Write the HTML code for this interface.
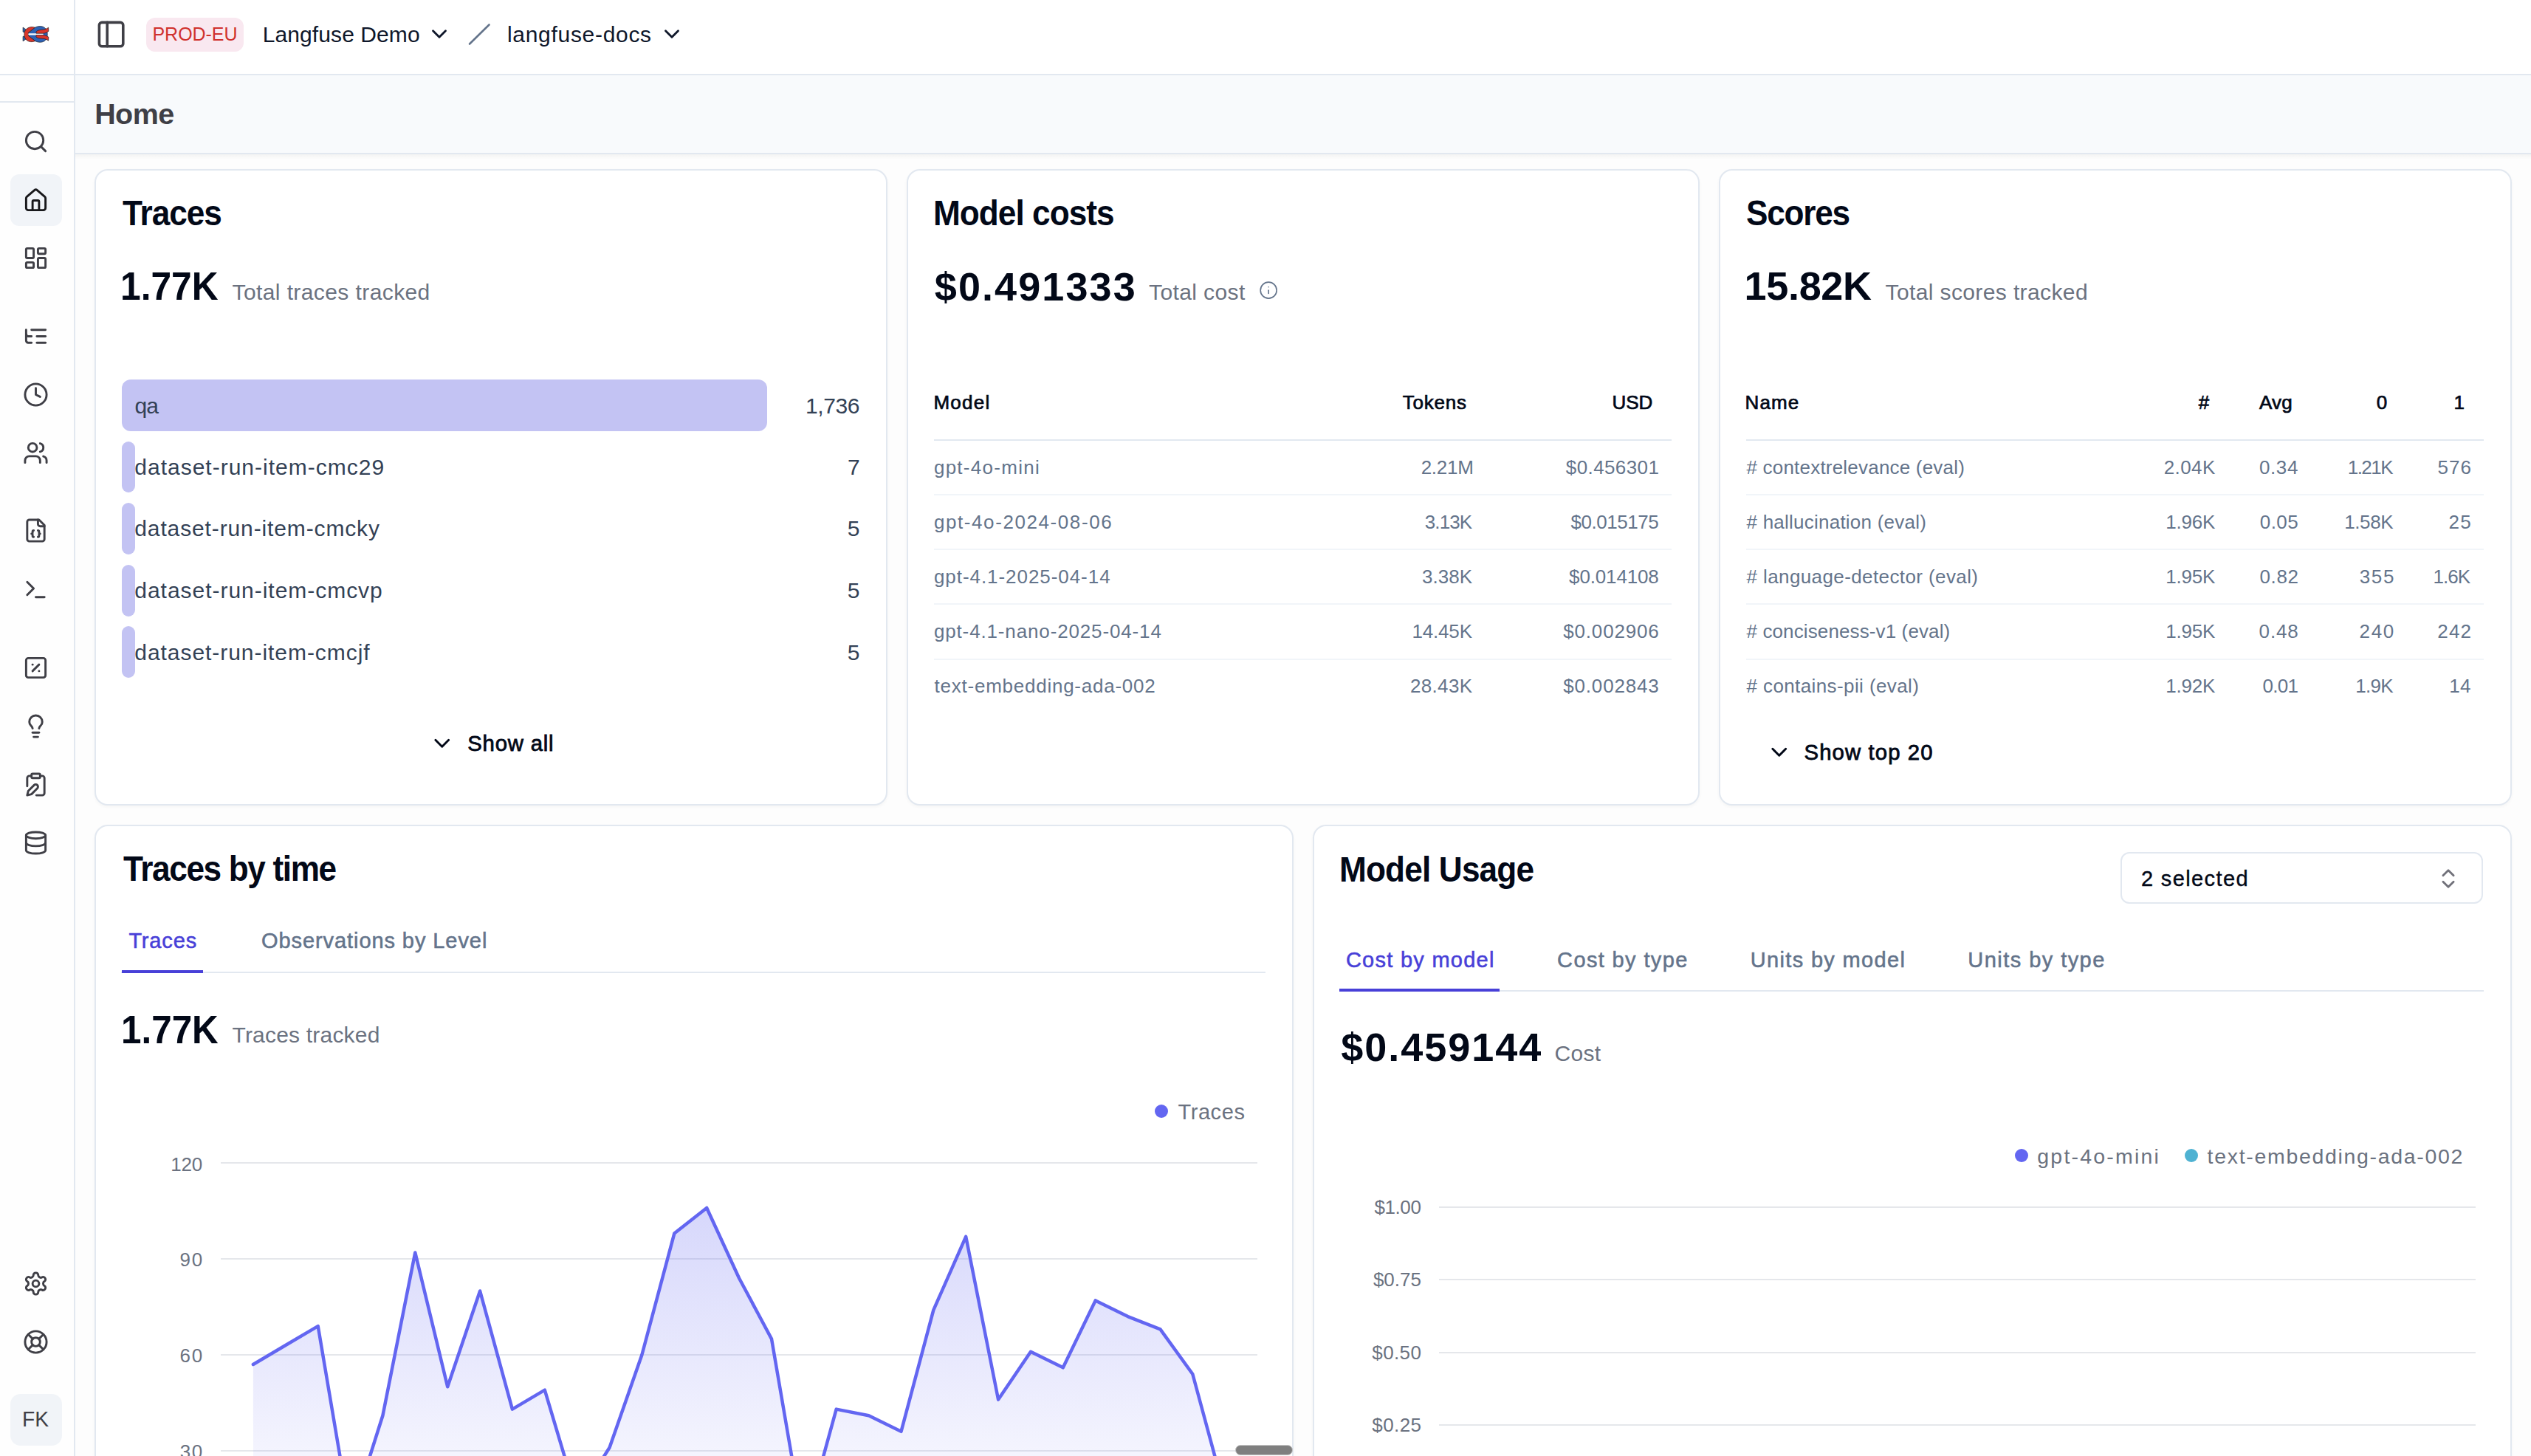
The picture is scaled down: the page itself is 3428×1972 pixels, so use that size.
<!DOCTYPE html>
<html><head><meta charset="utf-8"><title>Langfuse - Home</title>
<style>
html,body{margin:0;padding:0;}
body{width:3428px;height:1972px;overflow:hidden;position:relative;background:#fdfdfe;font-family:"Liberation Sans", sans-serif;}
.t{position:absolute;line-height:1;white-space:nowrap;}
.r{position:absolute;}
.ic{position:absolute;overflow:visible;}
@media (max-width: 1800px) { html { zoom: 0.5; } }
</style></head><body>
<div class="r" style="left:0px;top:0px;width:3428px;height:100px;background:#ffffff"></div>
<div class="r" style="left:0px;top:102px;width:100px;height:1870px;background:#fefefe"></div>
<div class="r" style="left:102px;top:208px;width:3326px;height:1764px;background:#fdfdfd"></div>
<div class="r" style="left:102px;top:102px;width:3326px;height:105px;background:#f8fafc"></div>
<div class="r" style="left:102px;top:209px;width:3326px;height:7px;background:linear-gradient(#f4f4f3, #fdfdfd)"></div>
<div class="r" style="left:0px;top:100px;width:3428px;height:2px;background:#e2e8f0"></div>
<div class="r" style="left:100px;top:0px;width:2px;height:1972px;background:#e2e8f0"></div>
<div class="r" style="left:0px;top:137px;width:100px;height:2px;background:#e2e8f0"></div>
<div class="r" style="left:102px;top:207px;width:3326px;height:2px;background:#e2e8f0"></div>
<svg class="ic" style="left:28px;top:30px" width="42" height="32" viewBox="0 0 1911 1456">
<g stroke="#151515" stroke-width="28" stroke-linejoin="round">
<path d="M140,320 L310,440 L240,620 L140,600 Z" fill="#2d62b5"/>
<path d="M140,1170 L310,1060 L240,860 L140,880 Z" fill="#2d62b5"/>
<path d="M470,640 C700,560 800,250 1200,250 C1500,250 1650,480 1650,750 C1650,1020 1500,1240 1200,1240 C800,1240 700,940 470,860 Z" fill="#2d62b5"/>
<path d="M880,330 C650,240 360,330 260,560 C200,700 210,850 280,1000 C380,1180 620,1280 900,1160 L480,850 L470,650 Z" fill="#d9352a"/>
<path d="M480,690 L1390,690 L1390,800 L480,800 C460,760 460,730 480,690 Z" fill="#ffffff" stroke="none"/>
<path d="M950,600 C1000,520 1150,480 1300,470 C1450,460 1560,440 1710,330 L1720,560 C1620,640 1500,690 1380,690 L960,690 Z" fill="#d9352a"/>
<path d="M950,900 C1000,980 1150,1010 1300,1010 C1450,1010 1560,1040 1710,1140 L1720,920 C1620,850 1500,800 1380,800 L960,800 Z" fill="#d9352a"/>
</g></svg>
<svg class="ic" style="left:128.60px;top:24.60px" width="43.2" height="43.2" viewBox="0 0 24 24" fill="none" stroke="#3f3f46" stroke-width="2" stroke-linecap="round" stroke-linejoin="round"><rect width="18" height="18" x="3" y="3" rx="2"/><path d="M9 3v18"/></svg>
<div class="r" style="left:198px;top:24px;width:132px;height:46px;background:#f9e8f0;border-radius:12px"></div>
<div class="t" style="top:34.10px;left:206.50px;font-size:25px;font-weight:400;color:#d0312d;letter-spacing:-0.050px;">PROD-EU</div>
<div class="t" style="top:31.96px;left:355.80px;font-size:30px;font-weight:400;color:#0f172a;letter-spacing:0.083px;">Langfuse Demo</div>
<svg class="ic" style="left:577.50px;top:29.30px" width="34" height="34" viewBox="0 0 24 24" fill="none" stroke="#0f172a" stroke-width="2" stroke-linecap="round" stroke-linejoin="round"><path d="m6 9 6 6 6-6"/></svg>
<svg class="ic" style="left:630px;top:28px" width="40" height="40" viewBox="0 0 40 40"><path d="M6 31.5 L32.5 5.5" stroke="#64748b" stroke-width="2.6" stroke-linecap="round"/></svg>
<div class="t" style="top:31.96px;left:687.00px;font-size:30px;font-weight:400;color:#0f172a;letter-spacing:0.692px;">langfuse-docs</div>
<svg class="ic" style="left:892.50px;top:29.30px" width="34" height="34" viewBox="0 0 24 24" fill="none" stroke="#0f172a" stroke-width="2" stroke-linecap="round" stroke-linejoin="round"><path d="m6 9 6 6 6-6"/></svg>
<div class="r" style="left:14px;top:236px;width:70px;height:70px;background:#f1f4f8;border-radius:12px"></div>
<svg class="ic" style="left:31.20px;top:174.10px" width="35" height="35" viewBox="0 0 24 24" fill="none" stroke="#3f3f46" stroke-width="2" stroke-linecap="round" stroke-linejoin="round"><circle cx="11" cy="11" r="8"/><path d="m21 21-4.3-4.3"/></svg>
<svg class="ic" style="left:31.20px;top:253.50px" width="35" height="35" viewBox="0 0 24 24" fill="none" stroke="#18181b" stroke-width="2" stroke-linecap="round" stroke-linejoin="round"><path d="M15 21v-8a1 1 0 0 0-1-1h-4a1 1 0 0 0-1 1v8"/><path d="M3 10a2 2 0 0 1 .709-1.528l7-5.999a2 2 0 0 1 2.582 0l7 5.999A2 2 0 0 1 21 10v9a2 2 0 0 1-2 2H5a2 2 0 0 1-2-2z"/></svg>
<svg class="ic" style="left:31.20px;top:332.00px" width="35" height="35" viewBox="0 0 24 24" fill="none" stroke="#3f3f46" stroke-width="2" stroke-linecap="round" stroke-linejoin="round"><rect width="7" height="9" x="3" y="3" rx="1"/><rect width="7" height="5" x="14" y="3" rx="1"/><rect width="7" height="9" x="14" y="12" rx="1"/><rect width="7" height="5" x="3" y="16" rx="1"/></svg>
<svg class="ic" style="left:31.20px;top:437.50px" width="35" height="35" viewBox="0 0 24 24" fill="none" stroke="#3f3f46" stroke-width="2" stroke-linecap="round" stroke-linejoin="round"><path d="M21 12h-8"/><path d="M21 6H8"/><path d="M21 18h-8"/><path d="M3 6v4c0 1.1.9 2 2 2h3"/><path d="M3 10v6c0 1.1.9 2 2 2h3"/></svg>
<svg class="ic" style="left:31.20px;top:516.50px" width="35" height="35" viewBox="0 0 24 24" fill="none" stroke="#3f3f46" stroke-width="2" stroke-linecap="round" stroke-linejoin="round"><circle cx="12" cy="12" r="10"/><polyline points="12 6 12 12 16 14"/></svg>
<svg class="ic" style="left:31.20px;top:595.50px" width="35" height="35" viewBox="0 0 24 24" fill="none" stroke="#3f3f46" stroke-width="2" stroke-linecap="round" stroke-linejoin="round"><path d="M16 21v-2a4 4 0 0 0-4-4H6a4 4 0 0 0-4 4v2"/><circle cx="9" cy="7" r="4"/><path d="M22 21v-2a4 4 0 0 0-3-3.87"/><path d="M16 3.13a4 4 0 0 1 0 7.75"/></svg>
<svg class="ic" style="left:31.20px;top:701.00px" width="35" height="35" viewBox="0 0 24 24" fill="none" stroke="#3f3f46" stroke-width="2" stroke-linecap="round" stroke-linejoin="round"><path d="M15 2H6a2 2 0 0 0-2 2v16a2 2 0 0 0 2 2h12a2 2 0 0 0 2-2V7Z"/><path d="M14 2v4a2 2 0 0 0 2 2h4"/><path d="M10 12a1 1 0 0 0-1 1v1a1 1 0 0 1-1 1 1 1 0 0 1 1 1v1a1 1 0 0 0 1 1"/><path d="M14 18a1 1 0 0 0 1-1v-1a1 1 0 0 1 1-1 1 1 0 0 1-1-1v-1a1 1 0 0 0-1-1"/></svg>
<svg class="ic" style="left:31.20px;top:780.50px" width="35" height="35" viewBox="0 0 24 24" fill="none" stroke="#3f3f46" stroke-width="2" stroke-linecap="round" stroke-linejoin="round"><polyline points="4 17 10 11 4 5"/><line x1="12" x2="20" y1="19" y2="19"/></svg>
<svg class="ic" style="left:31.20px;top:886.50px" width="35" height="35" viewBox="0 0 24 24" fill="none" stroke="#3f3f46" stroke-width="2" stroke-linecap="round" stroke-linejoin="round"><rect width="18" height="18" x="3" y="3" rx="2"/><path d="m15 9-6 6"/><path d="M9 9h.01"/><path d="M15 15h.01"/></svg>
<svg class="ic" style="left:31.20px;top:966.00px" width="35" height="35" viewBox="0 0 24 24" fill="none" stroke="#3f3f46" stroke-width="2" stroke-linecap="round" stroke-linejoin="round"><path d="M15 14c.2-1 .7-1.7 1.5-2.5 1-.9 1.5-2.2 1.5-3.5A6 6 0 0 0 6 8c0 1 .2 2.2 1.5 3.5.7.7 1.3 1.5 1.5 2.5"/><path d="M9 18h6"/><path d="M10 22h4"/></svg>
<svg class="ic" style="left:31.20px;top:1045.10px" width="35" height="35" viewBox="0 0 24 24" fill="none" stroke="#3f3f46" stroke-width="2" stroke-linecap="round" stroke-linejoin="round"><rect width="8" height="4" x="8" y="2" rx="1"/><path d="M10.4 12.6a2 2 0 0 1 3 3L8 21l-4 1 1-4Z"/><path d="M16 4h2a2 2 0 0 1 2 2v14a2 2 0 0 1-2 2h-5.5"/><path d="M4 13.5V6a2 2 0 0 1 2-2h2"/></svg>
<svg class="ic" style="left:31.20px;top:1123.50px" width="35" height="35" viewBox="0 0 24 24" fill="none" stroke="#3f3f46" stroke-width="2" stroke-linecap="round" stroke-linejoin="round"><ellipse cx="12" cy="5" rx="9" ry="3"/><path d="M3 5V19A9 3 0 0 0 21 19V5"/><path d="M3 12A9 3 0 0 0 21 12"/></svg>
<svg class="ic" style="left:31.20px;top:1720.50px" width="35" height="35" viewBox="0 0 24 24" fill="none" stroke="#3f3f46" stroke-width="2" stroke-linecap="round" stroke-linejoin="round"><path d="M12.22 2h-.44a2 2 0 0 0-2 2v.18a2 2 0 0 1-1 1.73l-.43.25a2 2 0 0 1-2 0l-.15-.08a2 2 0 0 0-2.73.73l-.22.38a2 2 0 0 0 .73 2.73l.15.1a2 2 0 0 1 1 1.72v.51a2 2 0 0 1-1 1.74l-.15.09a2 2 0 0 0-.73 2.73l.22.38a2 2 0 0 0 2.73.73l.15-.08a2 2 0 0 1 2 0l.43.25a2 2 0 0 1 1 1.73V20a2 2 0 0 0 2 2h.44a2 2 0 0 0 2-2v-.18a2 2 0 0 1 1-1.73l.43-.25a2 2 0 0 1 2 0l.15.08a2 2 0 0 0 2.73-.73l.22-.39a2 2 0 0 0-.73-2.73l-.15-.08a2 2 0 0 1-1-1.74v-.5a2 2 0 0 1 1-1.74l.15-.09a2 2 0 0 0 .73-2.73l-.22-.38a2 2 0 0 0-2.73-.73l-.15.08a2 2 0 0 1-2 0l-.43-.25a2 2 0 0 1-1-1.73V4a2 2 0 0 0-2-2z"/><circle cx="12" cy="12" r="3"/></svg>
<svg class="ic" style="left:31.20px;top:1799.50px" width="35" height="35" viewBox="0 0 24 24" fill="none" stroke="#3f3f46" stroke-width="2" stroke-linecap="round" stroke-linejoin="round"><circle cx="12" cy="12" r="10"/><path d="m4.93 4.93 4.24 4.24"/><path d="m14.83 9.17 4.24-4.24"/><path d="m14.83 14.83 4.24 4.24"/><path d="m9.17 14.83-4.24 4.24"/><circle cx="12" cy="12" r="4"/></svg>
<div class="r" style="left:14px;top:1888px;width:70px;height:70px;background:#f1f4f8;border-radius:14px"></div>
<div class="t" style="top:1907.36px;left:30.45px;font-size:30px;font-weight:400;color:#3f3f46;transform:scaleX(0.9407);transform-origin:0 0;">FK</div>
<div class="t" style="top:135.30px;left:128.20px;font-size:39.5px;font-weight:700;color:#3f3f46;letter-spacing:-0.600px;">Home</div>
<div class="r" style="left:128px;top:229px;width:1074px;height:862px;background:#fff;border:2px solid #e2e8f0;border-radius:18px;box-sizing:border-box;box-shadow:0 2px 4px rgba(0,0,0,0.035)"></div>
<div class="r" style="left:1228px;top:229px;width:1074px;height:862px;background:#fff;border:2px solid #e2e8f0;border-radius:18px;box-sizing:border-box;box-shadow:0 2px 4px rgba(0,0,0,0.035)"></div>
<div class="r" style="left:2328px;top:229px;width:1074px;height:862px;background:#fff;border:2px solid #e2e8f0;border-radius:18px;box-sizing:border-box;box-shadow:0 2px 4px rgba(0,0,0,0.035)"></div>
<div class="r" style="left:128px;top:1117px;width:1624px;height:1083px;background:#fff;border:2px solid #e2e8f0;border-radius:18px;box-sizing:border-box;box-shadow:0 2px 4px rgba(0,0,0,0.035)"></div>
<div class="r" style="left:1778px;top:1117px;width:1624px;height:1083px;background:#fff;border:2px solid #e2e8f0;border-radius:18px;box-sizing:border-box;box-shadow:0 2px 4px rgba(0,0,0,0.035)"></div>
<div class="t" style="top:265.22px;left:166.13px;font-size:47.5px;font-weight:700;color:#020817;letter-spacing:-1.125px;transform:scaleX(0.9300);transform-origin:0 0;">Traces</div>
<div class="t" style="top:360.21px;left:163.47px;font-size:54px;font-weight:700;color:#020817;transform:scaleX(0.9201);transform-origin:0 0;">1.77K</div>
<div class="t" style="top:380.56px;left:314.50px;font-size:30px;font-weight:400;color:#6b7280;letter-spacing:0.405px;">Total traces tracked</div>
<div class="r" style="left:165px;top:514px;width:874px;height:70px;background:#c3c3f3;border-radius:12px"></div>
<div class="r" style="left:165px;top:598px;width:18px;height:69px;background:#c3c3f3;border-radius:9px"></div>
<div class="r" style="left:165px;top:681px;width:18px;height:70px;background:#c3c3f3;border-radius:9px"></div>
<div class="r" style="left:165px;top:765px;width:18px;height:70px;background:#c3c3f3;border-radius:9px"></div>
<div class="r" style="left:165px;top:848px;width:18px;height:70px;background:#c3c3f3;border-radius:9px"></div>
<div class="t" style="top:534.56px;left:182.40px;font-size:30px;font-weight:400;color:#334155;letter-spacing:-0.800px;">qa</div>
<div class="t" style="top:618.46px;left:182.30px;font-size:30px;font-weight:400;color:#334155;letter-spacing:1.000px;">dataset-run-item-cmc29</div>
<div class="t" style="top:701.36px;left:182.30px;font-size:30px;font-weight:400;color:#334155;letter-spacing:0.871px;">dataset-run-item-cmcky</div>
<div class="t" style="top:785.06px;left:182.30px;font-size:30px;font-weight:400;color:#334155;letter-spacing:0.971px;">dataset-run-item-cmcvp</div>
<div class="t" style="top:868.56px;left:182.30px;font-size:30px;font-weight:400;color:#334155;letter-spacing:0.948px;">dataset-run-item-cmcjf</div>
<div class="t" style="top:534.56px;left:1091.10px;font-size:30px;font-weight:400;color:#334155;letter-spacing:-0.425px;">1,736</div>
<div class="t" style="top:618.46px;left:1148.00px;font-size:30px;font-weight:400;color:#334155;">7</div>
<div class="t" style="top:701.36px;left:1147.80px;font-size:30px;font-weight:400;color:#334155;">5</div>
<div class="t" style="top:785.06px;left:1147.80px;font-size:30px;font-weight:400;color:#334155;">5</div>
<div class="t" style="top:868.56px;left:1147.80px;font-size:30px;font-weight:400;color:#334155;">5</div>
<svg class="ic" style="left:580.65px;top:988.55px" width="35.5" height="35.5" viewBox="0 0 24 24" fill="none" stroke="#020817" stroke-width="2" stroke-linecap="round" stroke-linejoin="round"><path d="m6 9 6 6 6-6"/></svg>
<div class="t" style="top:992.15px;left:633.30px;font-size:29.3px;font-weight:400;color:#020817;letter-spacing:0.786px;-webkit-text-stroke:0.8px #020817;">Show all</div>
<div class="t" style="top:265.22px;left:1263.52px;font-size:47.5px;font-weight:700;color:#020817;letter-spacing:-1.048px;transform:scaleX(0.9300);transform-origin:0 0;">Model costs</div>
<div class="t" style="top:360.71px;left:1265.80px;font-size:54px;font-weight:700;color:#020817;letter-spacing:2.075px;">$0.491333</div>
<div class="t" style="top:380.56px;left:1556.10px;font-size:30px;font-weight:400;color:#6b7280;letter-spacing:0.378px;">Total cost</div>
<svg class="ic" style="left:1704.95px;top:379.95px" width="26.3" height="26.3" viewBox="0 0 24 24" fill="none" stroke="#64748b" stroke-width="1.5" stroke-linecap="round" stroke-linejoin="round"><circle cx="12" cy="12" r="10"/><path d="M12 16v-4"/><path d="M12 8h.01"/></svg>
<div class="t" style="top:531.95px;left:1264.40px;font-size:26px;font-weight:400;color:#020817;letter-spacing:1.275px;-webkit-text-stroke:0.7px #020817;">Model</div>
<div class="t" style="top:531.95px;left:1899.80px;font-size:26px;font-weight:400;color:#020817;letter-spacing:0.740px;-webkit-text-stroke:0.7px #020817;">Tokens</div>
<div class="t" style="top:531.95px;left:2183.50px;font-size:26px;font-weight:400;color:#020817;letter-spacing:-0.050px;-webkit-text-stroke:0.7px #020817;">USD</div>
<div class="r" style="left:1265px;top:595px;width:999px;height:2px;background:#e2e8f0"></div>
<div class="t" style="top:619.95px;left:1264.90px;font-size:26px;font-weight:400;color:#64748b;letter-spacing:1.280px;">gpt-4o-mini</div>
<div class="t" style="top:619.95px;left:1924.70px;font-size:26px;font-weight:400;color:#64748b;letter-spacing:-0.275px;">2.21M</div>
<div class="t" style="top:619.95px;left:2120.80px;font-size:26px;font-weight:400;color:#64748b;letter-spacing:0.400px;">$0.456301</div>
<div class="t" style="top:693.85px;left:1264.90px;font-size:26px;font-weight:400;color:#64748b;letter-spacing:1.588px;">gpt-4o-2024-08-06</div>
<div class="t" style="top:693.85px;left:1929.80px;font-size:26px;font-weight:400;color:#64748b;letter-spacing:-0.925px;">3.13K</div>
<div class="t" style="top:693.85px;left:2127.50px;font-size:26px;font-weight:400;color:#64748b;letter-spacing:-0.463px;">$0.015175</div>
<div class="t" style="top:767.75px;left:1264.90px;font-size:26px;font-weight:400;color:#64748b;letter-spacing:0.947px;">gpt-4.1-2025-04-14</div>
<div class="t" style="top:767.75px;left:1925.90px;font-size:26px;font-weight:400;color:#64748b;letter-spacing:0.050px;">3.38K</div>
<div class="t" style="top:767.75px;left:2125.10px;font-size:26px;font-weight:400;color:#64748b;letter-spacing:-0.150px;">$0.014108</div>
<div class="t" style="top:841.65px;left:1264.90px;font-size:26px;font-weight:400;color:#64748b;letter-spacing:0.859px;">gpt-4.1-nano-2025-04-14</div>
<div class="t" style="top:841.65px;left:1912.40px;font-size:26px;font-weight:400;color:#64748b;letter-spacing:-0.160px;">14.45K</div>
<div class="t" style="top:841.65px;left:2117.20px;font-size:26px;font-weight:400;color:#64748b;letter-spacing:0.837px;">$0.002906</div>
<div class="t" style="top:915.55px;left:1265.60px;font-size:26px;font-weight:400;color:#64748b;letter-spacing:0.752px;">text-embedding-ada-002</div>
<div class="t" style="top:915.55px;left:1910.00px;font-size:26px;font-weight:400;color:#64748b;letter-spacing:0.320px;">28.43K</div>
<div class="t" style="top:915.55px;left:2117.20px;font-size:26px;font-weight:400;color:#64748b;letter-spacing:0.837px;">$0.002843</div>
<div class="r" style="left:1265px;top:669px;width:999px;height:2px;background:#f1f5f9"></div>
<div class="r" style="left:1265px;top:743px;width:999px;height:2px;background:#f1f5f9"></div>
<div class="r" style="left:1265px;top:817px;width:999px;height:2px;background:#f1f5f9"></div>
<div class="r" style="left:1265px;top:892px;width:999px;height:2px;background:#f1f5f9"></div>
<div class="t" style="top:265.22px;left:2364.70px;font-size:47.5px;font-weight:700;color:#020817;letter-spacing:-1.343px;transform:scaleX(0.9300);transform-origin:0 0;">Scores</div>
<div class="t" style="top:360.21px;left:2362.60px;font-size:54px;font-weight:700;color:#020817;letter-spacing:-0.340px;">15.82K</div>
<div class="t" style="top:380.56px;left:2553.50px;font-size:30px;font-weight:400;color:#6b7280;letter-spacing:0.384px;">Total scores tracked</div>
<div class="t" style="top:531.75px;left:2363.50px;font-size:26px;font-weight:400;color:#020817;letter-spacing:1.133px;-webkit-text-stroke:0.7px #020817;">Name</div>
<div class="t" style="top:531.75px;left:2977.70px;font-size:26px;font-weight:400;color:#020817;-webkit-text-stroke:0.7px #020817;">#</div>
<div class="t" style="top:531.75px;left:3059.90px;font-size:26px;font-weight:400;color:#020817;letter-spacing:0.300px;-webkit-text-stroke:0.7px #020817;">Avg</div>
<div class="t" style="top:531.75px;left:3218.70px;font-size:26px;font-weight:400;color:#020817;-webkit-text-stroke:0.7px #020817;">0</div>
<div class="t" style="top:531.75px;left:3323.50px;font-size:26px;font-weight:400;color:#020817;-webkit-text-stroke:0.7px #020817;">1</div>
<div class="r" style="left:2365px;top:595px;width:999px;height:2px;background:#e2e8f0"></div>
<div class="t" style="top:619.95px;left:2365.50px;font-size:26px;font-weight:400;color:#64748b;letter-spacing:0.204px;"># contextrelevance (eval)</div>
<div class="t" style="top:619.95px;left:2930.70px;font-size:26px;font-weight:400;color:#64748b;letter-spacing:0.425px;">2.04K</div>
<div class="t" style="top:619.95px;left:3059.90px;font-size:26px;font-weight:400;color:#64748b;letter-spacing:0.633px;">0.34</div>
<div class="t" style="top:619.95px;left:3179.70px;font-size:26px;font-weight:400;color:#64748b;letter-spacing:-1.500px;">1.21K</div>
<div class="t" style="top:619.95px;left:3301.50px;font-size:26px;font-weight:400;color:#64748b;letter-spacing:1.050px;">576</div>
<div class="t" style="top:693.85px;left:2365.50px;font-size:26px;font-weight:400;color:#64748b;letter-spacing:0.233px;"># hallucination (eval)</div>
<div class="t" style="top:693.85px;left:2933.20px;font-size:26px;font-weight:400;color:#64748b;letter-spacing:-0.200px;">1.96K</div>
<div class="t" style="top:693.85px;left:3060.80px;font-size:26px;font-weight:400;color:#64748b;letter-spacing:0.433px;">0.05</div>
<div class="t" style="top:693.85px;left:3175.20px;font-size:26px;font-weight:400;color:#64748b;letter-spacing:-0.375px;">1.58K</div>
<div class="t" style="top:693.85px;left:3316.40px;font-size:26px;font-weight:400;color:#64748b;letter-spacing:1.500px;">25</div>
<div class="t" style="top:767.75px;left:2365.50px;font-size:26px;font-weight:400;color:#64748b;letter-spacing:0.400px;"># language-detector (eval)</div>
<div class="t" style="top:767.75px;left:2933.20px;font-size:26px;font-weight:400;color:#64748b;letter-spacing:-0.200px;">1.95K</div>
<div class="t" style="top:767.75px;left:3060.50px;font-size:26px;font-weight:400;color:#64748b;letter-spacing:0.600px;">0.82</div>
<div class="t" style="top:767.75px;left:3195.80px;font-size:26px;font-weight:400;color:#64748b;letter-spacing:1.600px;">355</div>
<div class="t" style="top:767.75px;left:3295.50px;font-size:26px;font-weight:400;color:#64748b;letter-spacing:-0.933px;">1.6K</div>
<div class="t" style="top:841.65px;left:2365.50px;font-size:26px;font-weight:400;color:#64748b;letter-spacing:0.118px;"># conciseness-v1 (eval)</div>
<div class="t" style="top:841.65px;left:2933.20px;font-size:26px;font-weight:400;color:#64748b;letter-spacing:-0.200px;">1.95K</div>
<div class="t" style="top:841.65px;left:3059.60px;font-size:26px;font-weight:400;color:#64748b;letter-spacing:0.867px;">0.48</div>
<div class="t" style="top:841.65px;left:3195.50px;font-size:26px;font-weight:400;color:#64748b;letter-spacing:1.700px;">240</div>
<div class="t" style="top:841.65px;left:3301.30px;font-size:26px;font-weight:400;color:#64748b;letter-spacing:1.200px;">242</div>
<div class="t" style="top:915.55px;left:2365.50px;font-size:26px;font-weight:400;color:#64748b;letter-spacing:0.400px;"># contains-pii (eval)</div>
<div class="t" style="top:915.55px;left:2933.20px;font-size:26px;font-weight:400;color:#64748b;letter-spacing:-0.200px;">1.92K</div>
<div class="t" style="top:915.55px;left:3064.40px;font-size:26px;font-weight:400;color:#64748b;letter-spacing:-0.700px;">0.01</div>
<div class="t" style="top:915.55px;left:3190.30px;font-size:26px;font-weight:400;color:#64748b;letter-spacing:-0.700px;">1.9K</div>
<div class="t" style="top:915.55px;left:3317.20px;font-size:26px;font-weight:400;color:#64748b;letter-spacing:0.400px;">14</div>
<div class="r" style="left:2365px;top:669px;width:999px;height:2px;background:#f1f5f9"></div>
<div class="r" style="left:2365px;top:743px;width:999px;height:2px;background:#f1f5f9"></div>
<div class="r" style="left:2365px;top:817px;width:999px;height:2px;background:#f1f5f9"></div>
<div class="r" style="left:2365px;top:892px;width:999px;height:2px;background:#f1f5f9"></div>
<svg class="ic" style="left:2391.95px;top:1000.55px" width="35.5" height="35.5" viewBox="0 0 24 24" fill="none" stroke="#020817" stroke-width="2" stroke-linecap="round" stroke-linejoin="round"><path d="m6 9 6 6 6-6"/></svg>
<div class="t" style="top:1003.95px;left:2443.50px;font-size:29.3px;font-weight:400;color:#020817;letter-spacing:1.110px;-webkit-text-stroke:0.8px #020817;">Show top 20</div>
<div class="t" style="top:1152.92px;left:166.53px;font-size:47.5px;font-weight:700;color:#020817;letter-spacing:-1.468px;transform:scaleX(0.9300);transform-origin:0 0;">Traces by time</div>
<div class="t" style="top:1259.91px;left:174.40px;font-size:29px;font-weight:400;color:#4840d8;letter-spacing:0.840px;-webkit-text-stroke:0.55px #4840d8;">Traces</div>
<div class="t" style="top:1259.91px;left:354.00px;font-size:29px;font-weight:400;color:#64748b;letter-spacing:0.920px;-webkit-text-stroke:0.55px #64748b;">Observations by Level</div>
<div class="r" style="left:164px;top:1316px;width:1550px;height:2px;background:#e2e8f0"></div>
<div class="r" style="left:165px;top:1314px;width:110px;height:4px;background:#4840d8"></div>
<div class="t" style="top:1366.51px;left:163.89px;font-size:54px;font-weight:700;color:#020817;transform:scaleX(0.9144);transform-origin:0 0;">1.77K</div>
<div class="t" style="top:1386.86px;left:314.50px;font-size:30px;font-weight:400;color:#6b7280;letter-spacing:0.200px;">Traces tracked</div>
<div class="r" style="left:1564px;top:1495.8px;width:18px;height:18px;border-radius:50%;background:#6366f1"></div>
<div class="t" style="top:1491.71px;left:1595.40px;font-size:29px;font-weight:400;color:#6b7280;letter-spacing:0.600px;">Traces</div>
<div class="r" style="left:299px;top:1574px;width:1404px;height:2px;background:#e5e7eb"></div>
<div class="t" style="top:1563.65px;left:231.20px;font-size:26px;font-weight:400;color:#6b7280;letter-spacing:-0.150px;">120</div>
<div class="r" style="left:299px;top:1704px;width:1404px;height:2px;background:#e5e7eb"></div>
<div class="t" style="top:1693.35px;left:243.50px;font-size:26px;font-weight:400;color:#6b7280;letter-spacing:1.800px;">90</div>
<div class="r" style="left:299px;top:1834px;width:1404px;height:2px;background:#e5e7eb"></div>
<div class="t" style="top:1823.15px;left:243.40px;font-size:26px;font-weight:400;color:#6b7280;letter-spacing:1.900px;">60</div>
<div class="r" style="left:299px;top:1964px;width:1404px;height:2px;background:#e5e7eb"></div>
<div class="t" style="top:1953.15px;left:243.70px;font-size:26px;font-weight:400;color:#6b7280;letter-spacing:1.600px;">30</div>
<svg class="ic" style="left:0;top:0" width="3428" height="1972" viewBox="0 0 3428 1972">
<defs><linearGradient id="g1" x1="0" y1="0" x2="0" y2="1"><stop offset="0" stop-color="#6366f1" stop-opacity="0.26"/><stop offset="1" stop-color="#6366f1" stop-opacity="0.0"/></linearGradient></defs>
<path d="M342.9,2094 L342.9,1848.0 L386.8,1822.0 L430.7,1796.1 L474.6,2055.7 L518.4,1917.2 L562.3,1696.5 L606.2,1878.3 L650.1,1748.5 L693.9,1908.6 L737.8,1882.6 L781.7,2029.7 L825.6,1960.5 L869.4,1835.0 L913.3,1670.6 L957.2,1636.0 L1001.1,1731.2 L1045.0,1813.4 L1088.8,2068.6 L1132.7,1908.6 L1176.6,1917.2 L1220.5,1938.8 L1264.3,1774.4 L1308.2,1674.9 L1352.1,1895.6 L1396.0,1830.7 L1439.8,1852.3 L1483.7,1761.4 L1527.6,1783.1 L1571.5,1800.4 L1615.3,1861.0 L1659.2,2023.2 L1659.2,2094 Z" fill="url(#g1)"/>
<polyline points="342.9,1848.0 386.8,1822.0 430.7,1796.1 474.6,2055.7 518.4,1917.2 562.3,1696.5 606.2,1878.3 650.1,1748.5 693.9,1908.6 737.8,1882.6 781.7,2029.7 825.6,1960.5 869.4,1835.0 913.3,1670.6 957.2,1636.0 1001.1,1731.2 1045.0,1813.4 1088.8,2068.6 1132.7,1908.6 1176.6,1917.2 1220.5,1938.8 1264.3,1774.4 1308.2,1674.9 1352.1,1895.6 1396.0,1830.7 1439.8,1852.3 1483.7,1761.4 1527.6,1783.1 1571.5,1800.4 1615.3,1861.0 1659.2,2023.2" fill="none" stroke="#6366f1" stroke-width="4.5" stroke-linejoin="round" stroke-linecap="round"/>
</svg>
<div class="r" style="left:1673px;top:1957px;width:78px;height:14px;background:#7f7f7f;border:1.5px solid #c4c4c4;border-radius:8px;box-sizing:border-box"></div>
<div class="t" style="top:1153.72px;left:1814.02px;font-size:47.5px;font-weight:700;color:#020817;letter-spacing:-0.906px;transform:scaleX(0.9300);transform-origin:0 0;">Model Usage</div>
<div class="r" style="left:2872px;top:1154px;width:491px;height:70px;background:#fff;border:2px solid #e2e8f0;border-radius:12px;box-sizing:border-box"></div>
<div class="t" style="top:1176.21px;left:2899.90px;font-size:29px;font-weight:400;color:#020817;letter-spacing:1.389px;-webkit-text-stroke:0.4px #020817;">2 selected</div>
<svg class="ic" style="left:3299.00px;top:1172.50px" width="34" height="34" viewBox="0 0 24 24" fill="none" stroke="#71717a" stroke-width="2" stroke-linecap="round" stroke-linejoin="round"><path d="m7 15 5 5 5-5"/><path d="m7 9 5-5 5 5"/></svg>
<div class="t" style="top:1285.91px;left:1822.90px;font-size:29px;font-weight:400;color:#4840d8;letter-spacing:1.267px;-webkit-text-stroke:0.55px #4840d8;">Cost by model</div>
<div class="t" style="top:1285.91px;left:2109.10px;font-size:29px;font-weight:400;color:#64748b;letter-spacing:1.364px;-webkit-text-stroke:0.55px #64748b;">Cost by type</div>
<div class="t" style="top:1285.91px;left:2370.80px;font-size:29px;font-weight:400;color:#64748b;letter-spacing:1.331px;-webkit-text-stroke:0.55px #64748b;">Units by model</div>
<div class="t" style="top:1285.91px;left:2665.30px;font-size:29px;font-weight:400;color:#64748b;letter-spacing:1.450px;-webkit-text-stroke:0.55px #64748b;">Units by type</div>
<div class="r" style="left:1814px;top:1341px;width:1550px;height:2px;background:#e2e8f0"></div>
<div class="r" style="left:1814px;top:1339px;width:217px;height:4px;background:#4840d8"></div>
<div class="t" style="top:1391.21px;left:1816.30px;font-size:54px;font-weight:700;color:#020817;letter-spacing:1.975px;">$0.459144</div>
<div class="t" style="top:1411.56px;left:2105.50px;font-size:30px;font-weight:400;color:#6b7280;letter-spacing:0.333px;">Cost</div>
<div class="r" style="left:2729px;top:1556px;width:18px;height:18px;border-radius:50%;background:#6366f1"></div>
<div class="t" style="top:1552.23px;left:2759.30px;font-size:28.5px;font-weight:400;color:#6b7280;letter-spacing:2.210px;">gpt-4o-mini</div>
<div class="r" style="left:2958.5px;top:1556px;width:18px;height:18px;border-radius:50%;background:#4fb2d2"></div>
<div class="t" style="top:1552.23px;left:2989.60px;font-size:28.5px;font-weight:400;color:#6b7280;letter-spacing:1.681px;">text-embedding-ada-002</div>
<div class="r" style="left:1949px;top:1634px;width:1404px;height:2px;background:#e5e7eb"></div>
<div class="t" style="top:1622.25px;left:1861.40px;font-size:26px;font-weight:400;color:#6b7280;letter-spacing:-0.400px;">$1.00</div>
<div class="r" style="left:1949px;top:1732px;width:1404px;height:2px;background:#e5e7eb"></div>
<div class="t" style="top:1720.35px;left:1859.90px;font-size:26px;font-weight:400;color:#6b7280;">$0.75</div>
<div class="r" style="left:1949px;top:1831px;width:1404px;height:2px;background:#e5e7eb"></div>
<div class="t" style="top:1818.85px;left:1858.30px;font-size:26px;font-weight:400;color:#6b7280;letter-spacing:0.375px;">$0.50</div>
<div class="r" style="left:1949px;top:1929px;width:1404px;height:2px;background:#e5e7eb"></div>
<div class="t" style="top:1917.35px;left:1858.30px;font-size:26px;font-weight:400;color:#6b7280;letter-spacing:0.400px;">$0.25</div>
</body></html>
